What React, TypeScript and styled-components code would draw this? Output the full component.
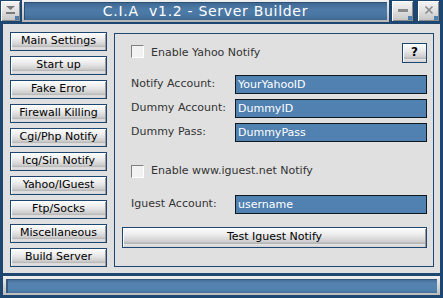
import React from 'react';
import styled, { createGlobalStyle } from 'styled-components';

const GlobalStyle = createGlobalStyle`
    html, body {
        margin : 0;
        padding : 0;
        background : #1d4670;
    }
    * {
        box-sizing : border-box;
    }
`;

const Window = styled.div`
    width : 443px;
    height : 298px;
    background : #1d4670;
    display : flex;
    flex-direction : column;
    font-family : "DejaVu Sans", Verdana, sans-serif;
`;

const TitleBar = styled.div`
    height : 24px;
    display : flex;
    flex-direction : row;
    padding : 0 3px 2px 0;
`;

const SysButton = styled.div<{ $w: number; $ml?: number }>`
    position : relative;
    width : ${p => p.$w}px;
    height : 22px;
    margin-left : ${p => p.$ml ?? 0}px;
    background : linear-gradient(to bottom, #f4f4f4 0%, #e2e2e2 45%, #c4c4c4 100%);
    border : 1px solid #1d4670;
    box-shadow : inset 1px 1px #ffffff, inset -1px -1px #8a8a8a;
    display : flex;
    align-items : center;
    justify-content : center;
    padding-bottom : 3px;

    &::after {
        content : '';
        position : absolute;
        right : 1px;
        bottom : 1px;
        width : 4px;
        height : 4px;
        background : #4f7eac;
    }
`;

const TitleFrame = styled.div`
    flex : 1;
    margin-left : 1px;
    height : 22px;
    padding : 2px;
    background : linear-gradient(to bottom, #f0f0f0, #b8b8b8);
`;

const TitleInner = styled.div`
    height : 100%;
    background : linear-gradient(to bottom, #3d6690 0%, #4d7aa6 40%, #4a77a3 70%, #3e6892 100%);
    box-shadow : inset 1px 1px #2b5177;
    color : #ffffff;
    font-size : 14px;
    letter-spacing : 0.7px;
    white-space : pre;
    display : flex;
    align-items : center;
    justify-content : center;
`;

const Body = styled.div`
    height : 249px;
    margin : 0 3px;
    background : #e0e0e0;
    display : flex;
    flex-direction : row;
    padding : 8px 6px 0 7px;
`;

const SideBar = styled.div`
    width : 97px;
    display : flex;
    flex-direction : column;
    gap : 5px;
`;

const SideButton = styled.div`
    height : 19px;
    border : 1px solid #1d4670;
    background : linear-gradient(to bottom, #fdfdfd 0%, #ececec 35%, #cfcfcf 70%, #b4b4b4 82%, #e4e4e4 86%, #d2d2d2 100%);
    box-shadow : inset 1px 1px #ffffff, inset -1px 0 #9a9a9a;
    color : #000000;
    font-size : 11px;
    display : flex;
    align-items : center;
    justify-content : center;
    padding-bottom : 2px;
    white-space : nowrap;
`;

const Panel = styled.div`
    width : 320px;
    height : 234px;
    margin : 1px 0 0 7px;
    border : 1px solid #1d4670;
    display : flex;
    flex-direction : column;
    padding : 9px 6px 0 7px;
`;

const Row = styled.div<{ $mt?: number; $h: number }>`
    display : flex;
    flex-direction : row;
    align-items : center;
    height : ${p => p.$h}px;
    margin-top : ${p => p.$mt ?? 0}px;
`;

const CheckBox = styled.div<{ $top?: number }>`
    width : 13px;
    height : 13px;
    margin-left : 9px;
    align-self : ${p => (p.$top !== undefined ? 'flex-start' : 'center')};
    margin-top : ${p => p.$top ?? 0}px;
    background : #f2f2f2;
    border : 1px solid;
    border-color : #808080 #ffffff #ffffff #808080;
`;

const CheckLabel = styled.span`
    margin-left : 7px;
    padding-bottom : 2px;
    font-size : 11px;
    color : #333333;
`;

const HelpButton = styled.div`
    margin-left : auto;
    width : 25px;
    height : 20px;
    border : 1px solid #1d4670;
    background : linear-gradient(to bottom, #fdfdfd 0%, #ececec 35%, #cfcfcf 70%, #b4b4b4 80%, #e4e4e4 85%, #d2d2d2 100%);
    box-shadow : inset 1px 1px #ffffff;
    font-size : 12px;
    font-weight : bold;
    color : #000000;
    display : flex;
    align-items : center;
    justify-content : center;
    padding-bottom : 2px;
`;

const FieldLabel = styled.span`
    width : 113px;
    padding-left : 9px;
    padding-bottom : 3px;
    font-size : 11px;
    color : #333333;
    white-space : nowrap;
`;

const Field = styled.div`
    flex : 1;
    height : 19px;
    background : #5181b0;
    border : 1px solid #101820;
    color : #ffffff;
    font-size : 11px;
    padding-left : 2px;
    display : flex;
    align-items : center;
`;

const TestButton = styled.div`
    margin-top : 13px;
    height : 21px;
    border : 1px solid #1d4670;
    background : linear-gradient(to bottom, #fdfdfd 0%, #ececec 35%, #cfcfcf 70%, #b4b4b4 82%, #e4e4e4 86%, #d2d2d2 100%);
    box-shadow : inset 1px 1px #ffffff, inset -1px 0 #9a9a9a;
    font-size : 11px;
    color : #000000;
    display : flex;
    align-items : center;
    justify-content : center;
    padding-bottom : 2px;
`;

const StatusBar = styled.div`
    height : 19px;
    margin : 3px 3px 0 3px;
    padding : 3px 3px 2px 3px;
    background : linear-gradient(to bottom, #f0f0f0, #bcbcbc);
`;

const StatusInner = styled.div`
    height : 100%;
    background : linear-gradient(to bottom, #3f6890 0%, #5583b0 30%, #5281ae 80%, #44709a 100%);
    box-shadow : inset 2px 1px #34597f;
`;

const sideItems = [
    'Main Settings', 'Start up', 'Fake Error', 'Firewall Killing', 'Cgi/Php Notify',
    'Icq/Sin Notify', 'Yahoo/IGuest', 'Ftp/Socks', 'Miscellaneous', 'Build Server',
];

const App = () => {
    return (
        <Window>
            <GlobalStyle />
            <TitleBar>
                <SysButton $w={21}>
                    <svg width="11" height="10" viewBox="0 0 11 10">
                        <polygon points="1,1 10,1 5.5,5" fill="#7a7a7a" />
                        <rect x="1" y="7" width="9" height="2" fill="#7a7a7a" />
                    </svg>
                </SysButton>
                <TitleFrame>
                    <TitleInner>{'C.I.A  v1.2 - Server Builder'}</TitleInner>
                </TitleFrame>
                <SysButton $w={23} $ml={2}>
                    <svg width="12" height="6" viewBox="0 0 12 6">
                        <rect x="1" y="2" width="10" height="3" fill="#8a8a8a" />
                    </svg>
                </SysButton>
                <SysButton $w={23} $ml={3}>
                    <svg width="10" height="10" viewBox="0 0 10 10">
                        <path d="M1.5 1.5 L8.5 8.5 M8.5 1.5 L1.5 8.5" stroke="#8a8a8a" strokeWidth="1.6" />
                    </svg>
                </SysButton>
            </TitleBar>
            <Body>
                <SideBar>
                    {sideItems.map(item => (
                        <SideButton key={item}>{item}</SideButton>
                    ))}
                </SideBar>
                <Panel>
                    <Row $h={20}>
                        <CheckBox $top={2} />
                        <CheckLabel>Enable Yahoo Notify</CheckLabel>
                        <HelpButton>?</HelpButton>
                    </Row>
                    <Row $h={19} $mt={12}>
                        <FieldLabel>Notify Account:</FieldLabel>
                        <Field>YourYahooID</Field>
                    </Row>
                    <Row $h={19} $mt={5}>
                        <FieldLabel>Dummy Account:</FieldLabel>
                        <Field>DummyID</Field>
                    </Row>
                    <Row $h={19} $mt={5}>
                        <FieldLabel>Dummy Pass:</FieldLabel>
                        <Field>DummyPass</Field>
                    </Row>
                    <Row $h={13} $mt={23}>
                        <CheckBox />
                        <CheckLabel>Enable www.iguest.net Notify</CheckLabel>
                    </Row>
                    <Row $h={19} $mt={17}>
                        <FieldLabel>Iguest Account:</FieldLabel>
                        <Field>username</Field>
                    </Row>
                    <TestButton>Test Iguest Notify</TestButton>
                </Panel>
            </Body>
            <StatusBar>
                <StatusInner />
            </StatusBar>
        </Window>
    );
};

export default App;
